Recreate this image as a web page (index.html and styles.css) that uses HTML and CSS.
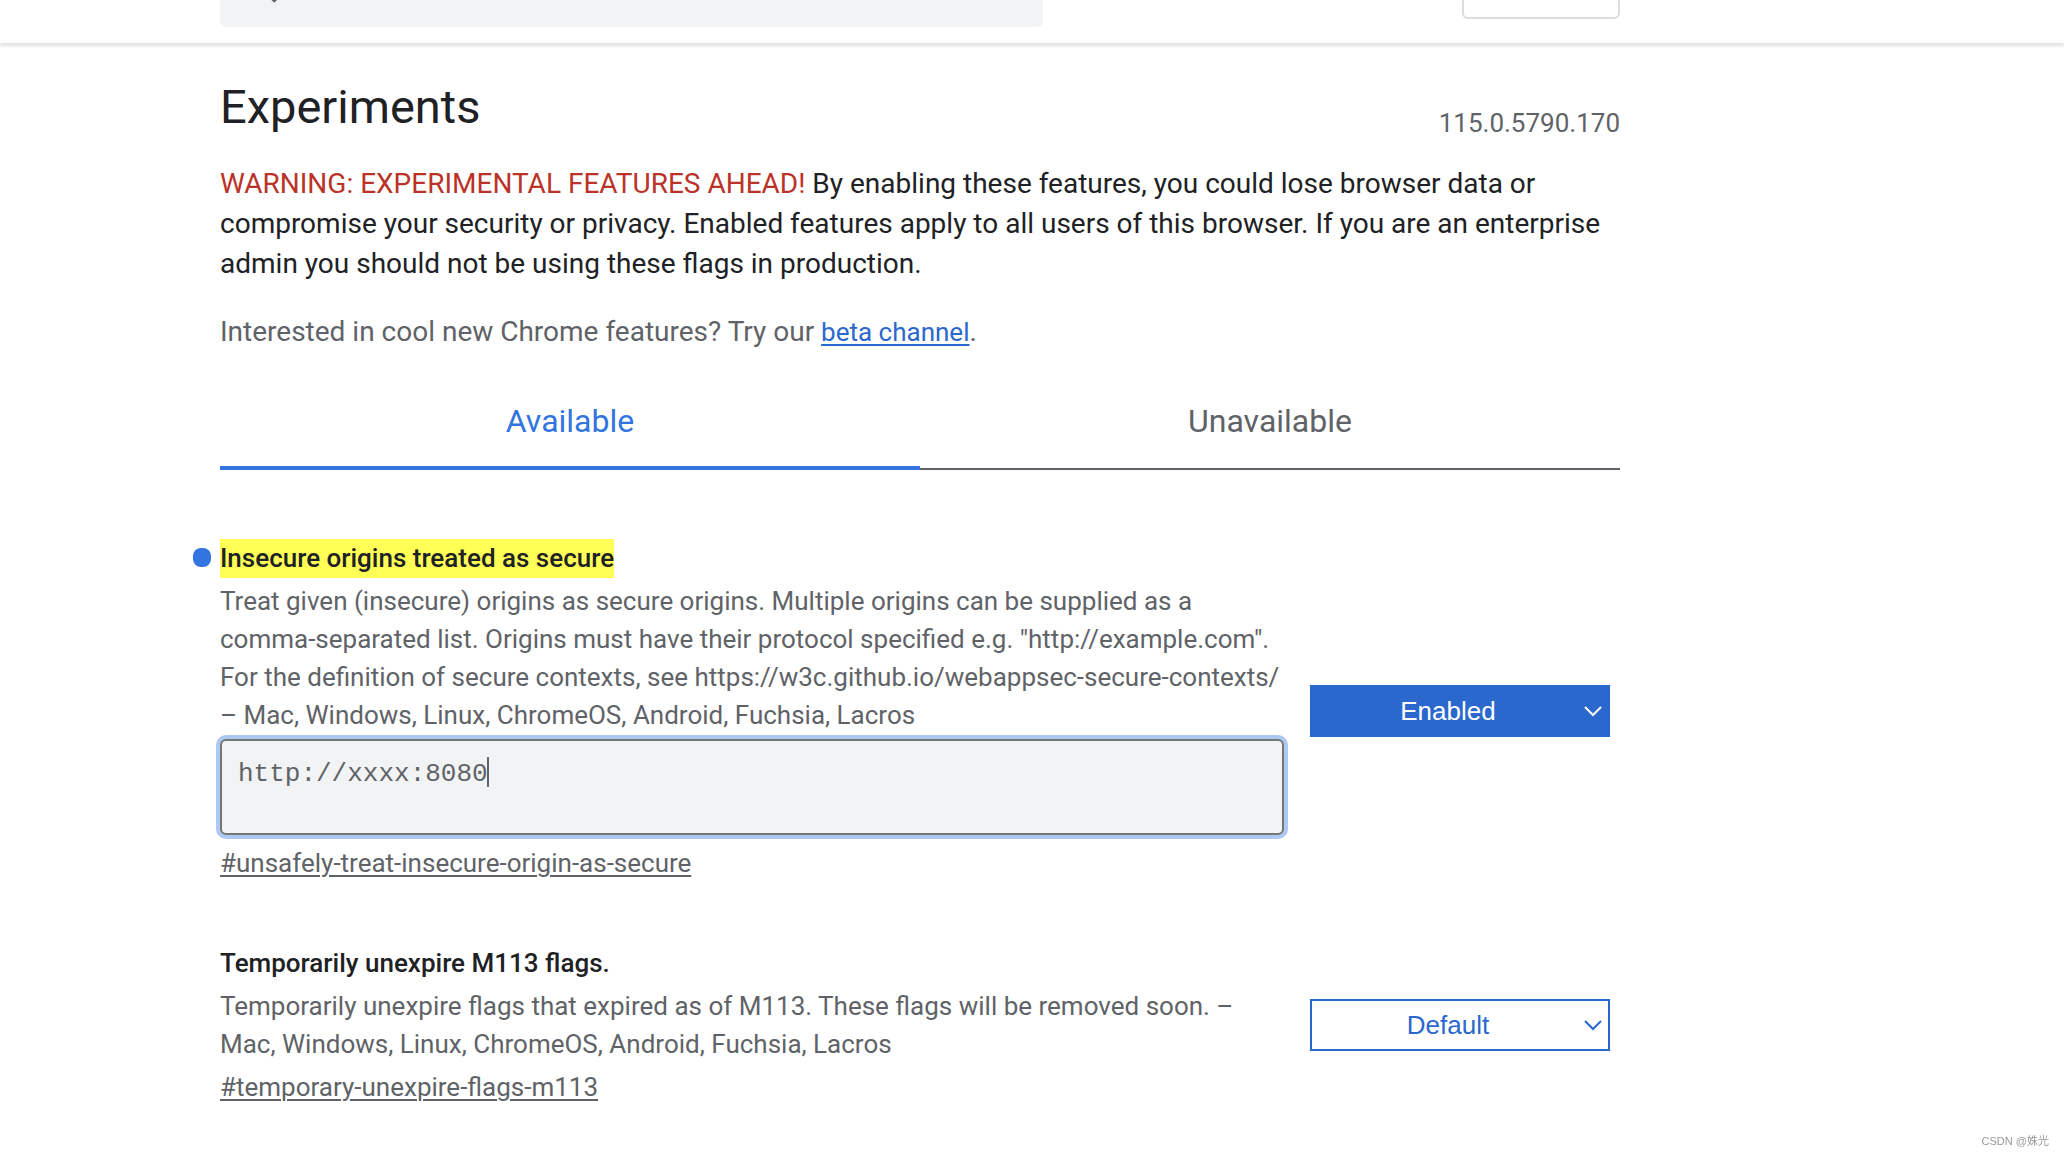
FILE: index.html
```html
<!DOCTYPE html>
<html lang="en">

<head>
  <meta charset="UTF-8">
  <meta name="viewport" content="width=device-width, initial-scale=1.0">
  <title>Experiments</title>
  <link rel="stylesheet" href="styles.css">
</head>

<body>

  <header class="header">
    <div class="header-content">
      <div class="search-container">
        <input class="search" type="text" aria-label="Search flags">
        <svg class="search-icon" viewBox="0 0 36 36" aria-hidden="true">
          <circle cx="13" cy="13" r="9" />
          <path d="M19 19l13 13" />
        </svg>
      </div>
      <button class="reset-button" type="button" aria-label="Reset all"></button>
    </div>
  </header>

  <main class="body-container">
    <div class="title-row">
      <h1 class="title">Experiments</h1>
      <span class="version">115.0.5790.170</span>
    </div>

    <p class="blurb"><span class="blurb-warning">WARNING: EXPERIMENTAL FEATURES AHEAD!</span> By enabling these features, you could lose browser data or compromise your security or privacy. Enabled features apply to all users of this browser. If you are an enterprise admin you should not be using these flags in production.</p>
    <p class="promo">Interested in cool new Chrome features? Try our <a class="promo-link" href="#">beta channel</a>.</p>

    <div class="tabs" role="tablist">
      <button class="tab selected" type="button" role="tab" aria-selected="true">Available</button>
      <button class="tab" type="button" role="tab" aria-selected="false">Unavailable</button>
    </div>

    <div class="experiment">
      <div class="flex">
        <h2 class="experiment-name changed"><mark class="match">Insecure origins treated as secure</mark></h2>
        <p class="description">Treat given (insecure) origins as secure origins. Multiple origins can be supplied as a comma-separated list. Origins must have their protocol specified e.g. "http://example.com". For the definition of secure contexts, see https://w3c.github.io/webappsec-secure-contexts/ – Mac, Windows, Linux, ChromeOS, Android, Fuchsia, Lacros</p>
        <div class="origin-list">
          <textarea class="origin-list-value" aria-label="Insecure origins treated as secure" spellcheck="false">http://xxxx:8080</textarea>
          <span class="caret"></span>
        </div>
        <a class="permalink" href="#unsafely-treat-insecure-origin-as-secure">#unsafely-treat-insecure-origin-as-secure</a>
      </div>
      <div class="select-wrap enabled">
        <select class="experiment-select" aria-label="Insecure origins treated as secure state">
          <option>Enabled</option>
        </select>
        <svg class="chevron" viewBox="0 0 20 12" aria-hidden="true"><path d="M2 2l8 8 8-8" /></svg>
      </div>
    </div>

    <div class="experiment">
      <div class="flex">
        <h2 class="experiment-name">Temporarily unexpire M113 flags.</h2>
        <p class="description">Temporarily unexpire flags that expired as of M113. These flags will be removed soon. – Mac, Windows, Linux, ChromeOS, Android, Fuchsia, Lacros</p>
        <a class="permalink" href="#temporary-unexpire-flags-m113">#temporary-unexpire-flags-m113</a>
      </div>
      <div class="select-wrap">
        <select class="experiment-select" aria-label="Temporarily unexpire M113 flags state">
          <option>Default</option>
        </select>
        <svg class="chevron" viewBox="0 0 20 12" aria-hidden="true"><path d="M2 2l8 8 8-8" /></svg>
      </div>
    </div>
  </main>

  <div class="watermark">CSDN @姝光</div>

</body>

</html>
```
FILE: styles.css
```css
* {
  box-sizing: border-box;
}

body {
  margin: 0;
  background: #fff;
  color: #202124;
  font-family: Roboto, "Noto Sans CJK SC", sans-serif;
  font-size: 26px;
  line-height: 38px;
}

h1, h2, p {
  margin: 0;
  font-weight: 400;
}

/* Header bar, scrolled partly out of view */
.header {
  height: 112px;
  margin-top: -69px;
  padding-left: 220px;
  background: #fff;
  box-shadow: 0 3px 3px rgba(0, 0, 0, 0.12);
}

.header-content {
  display: flex;
  align-items: center;
  justify-content: space-between;
  max-width: 1400px;
  height: 100%;
}

.search-container {
  position: relative;
  width: 823px;
}

.search {
  display: block;
  width: 100%;
  height: 80px;
  padding: 0 80px;
  border: none;
  border-radius: 6px;
  background: #f1f3f4;
  font: inherit;
}

.search-icon {
  position: absolute;
  top: 22px;
  left: 24px;
  width: 36px;
  height: 36px;
  fill: none;
  stroke: #5f6368;
  stroke-width: 5;
}

.reset-button {
  width: 158px;
  height: 64px;
  border: 2px solid #dadce0;
  border-radius: 6px;
  background: #fff;
}

/* Page content */
.body-container {
  max-width: 1620px;
  padding: 36px 0 40px 220px;
}

.title-row {
  display: flex;
  align-items: flex-end;
  justify-content: space-between;
  margin-bottom: 22px;
}

.title {
  padding-bottom: 7px;
  font-size: 47px;
  line-height: 56px;
}

.version {
  color: #5f6368;
}

.blurb,
.promo {
  margin-bottom: 28px;
  font-size: 28px;
  line-height: 40px;
}

.blurb-warning {
  color: #bb3328;
}

.promo {
  color: #5f6368;
}

.promo-link {
  color: #2b68cd;
  font-size: 26px;
  text-decoration-thickness: 2px;
  text-underline-offset: 3px;
}

/* Tabs */
.tabs {
  display: flex;
  margin-bottom: 69px;
}

.tab {
  flex: 1;
  height: 90px;
  padding: 22px 0 28px;
  border: none;
  border-bottom: 2px solid #5f6368;
  background: none;
  color: #5f6368;
  font-family: inherit;
  font-size: 32px;
  line-height: 38px;
}

.tab.selected {
  padding-bottom: 26px;
  border-bottom: 4px solid #3274e0;
  color: #3274e0;
}

/* Experiment rows */
.experiment {
  display: flex;
  align-items: center;
  gap: 26px;
  margin-bottom: 62px;
  padding-right: 10px;
}

.flex {
  flex: 1;
}

.experiment-name {
  position: relative;
  margin-bottom: 4px;
  font-size: 26px;
  font-weight: 500;
  line-height: 39px;
}

/* Blue dot in front of a flag that was changed */
.experiment-name.changed::before {
  content: "";
  position: absolute;
  top: 9px;
  left: -27px;
  width: 18px;
  height: 19px;
  border-radius: 8px;
  background: #3274e0;
}

.match {
  display: inline-block;
  background: #ff5;
  color: inherit;
}

.description {
  color: #5f6368;
}

.origin-list {
  position: relative;
  margin-top: 5px;
  padding-bottom: 4px;
}

.origin-list-value {
  display: block;
  width: 100%;
  height: 96px;
  padding: 18px 16px;
  border: 2px solid #767676;
  border-radius: 6px;
  outline: none;
  box-shadow: 0 0 0 4px #aec8f4;
  background: #f1f3f4;
  color: #5f6368;
  font-family: "Liberation Mono", monospace;
  font-size: 26px;
  line-height: 30px;
  resize: none;
}

.caret {
  position: absolute;
  top: 18px;
  left: 267px;
  width: 2px;
  height: 30px;
  background: #5f6368;
}

.permalink {
  display: block;
  width: fit-content;
  margin-top: 5px;
  color: #5f6368;
  text-decoration-thickness: 2px;
  text-underline-offset: 3px;
}

.select-wrap {
  position: relative;
  width: 300px;
  color: #2b68cd;
}

.experiment-select {
  appearance: none;
  display: block;
  width: 100%;
  height: 52px;
  padding: 0 24px 0 0;
  border: 2px solid #2b68cd;
  border-radius: 0;
  background: #fff;
  color: inherit;
  font-family: "Liberation Sans", Arial, sans-serif;
  font-size: 26px;
  text-align: center;
  text-align-last: center;
}

.enabled {
  color: #fff;
}

.enabled .experiment-select {
  background: #2b68cd;
}

.chevron {
  position: absolute;
  top: 20px;
  right: 7px;
  width: 20px;
  height: 12px;
  fill: none;
  stroke: currentColor;
  stroke-width: 2;
  pointer-events: none;
}

.watermark {
  position: fixed;
  right: 15px;
  bottom: 6px;
  color: #999;
  font-family: "Liberation Sans", "Noto Sans CJK SC", sans-serif;
  font-size: 11px;
  line-height: 18px;
}
```
